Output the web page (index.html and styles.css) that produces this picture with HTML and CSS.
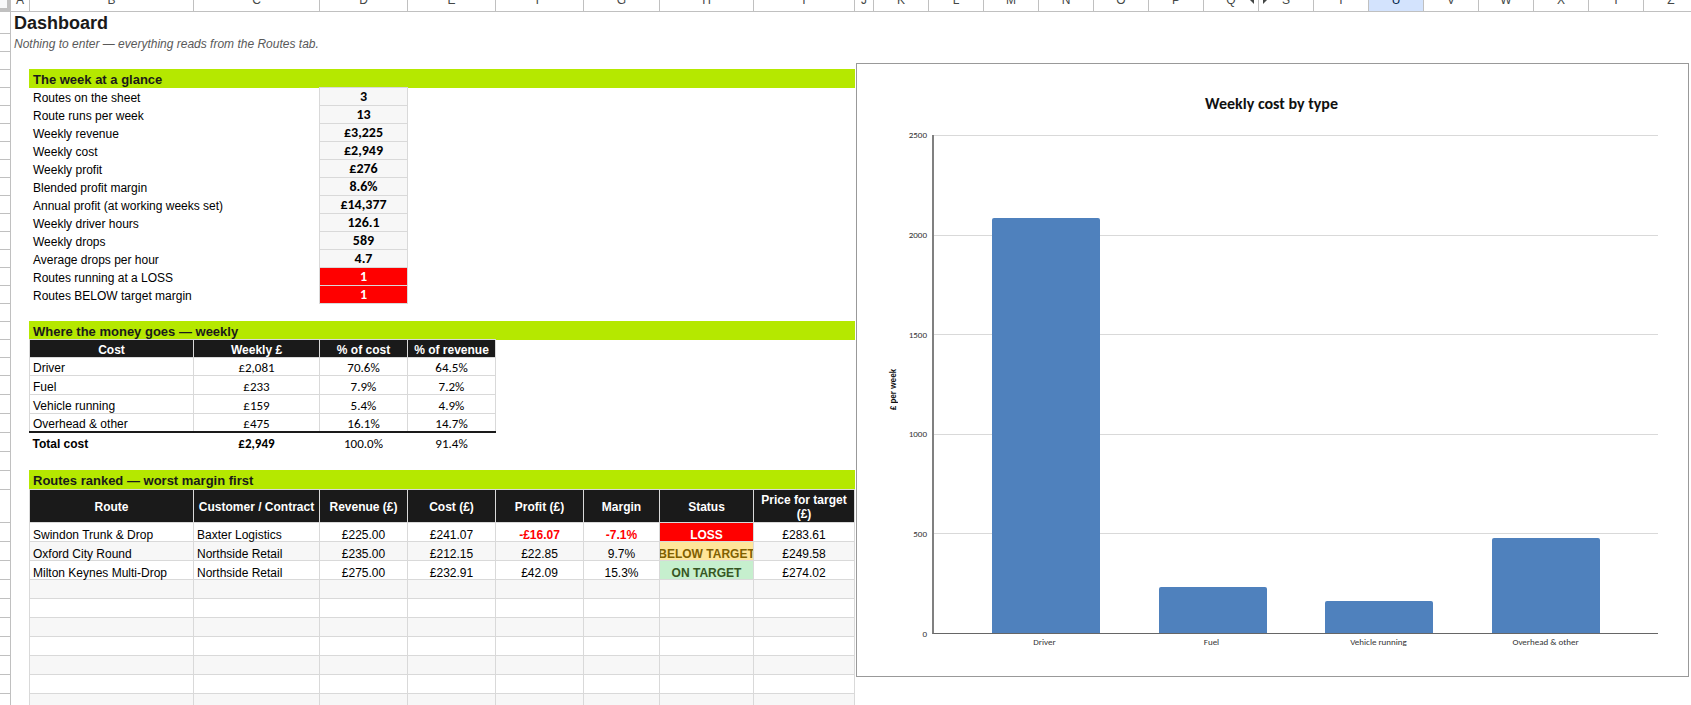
FILE: index.html
```
<!DOCTYPE html>
<html lang="en">
<head>
<meta charset="utf-8">
<title>Dashboard</title>
<link rel="stylesheet" href="styles.css">
</head>
<body>
<div class="workbook">
  <div class="columns">
    <span class="corner"></span>
    <span class="col w-a">A</span><span class="col w-b">B</span><span class="col w-c">C</span><span class="col w-d">D</span><span class="col w-d">E</span><span class="col w-d">F</span><span class="col w-g">G</span><span class="col w-h">H</span><span class="col w-i">I</span><span class="col w-j">J</span><span class="col">K</span><span class="col">L</span><span class="col">M</span><span class="col">N</span><span class="col">O</span><span class="col">P</span><span class="col has-prev">Q<svg class="tri prev" viewBox="0 0 4 8"><path d="M4 0v8L0 4z"/></svg></span><span class="col has-next"><svg class="tri next" viewBox="0 0 4 8"><path d="M0 0v8l4-4z"/></svg>S</span><span class="col">T</span><span class="col selected">U</span><span class="col">V</span><span class="col">W</span><span class="col">X</span><span class="col">Y</span><span class="col">Z</span>
  </div>
  <div class="body">
    <div class="gutter">
      <i class="r22"></i><i></i><i></i><i></i><i></i><i></i><i></i><i></i><i></i><i></i><i></i><i></i><i></i><i></i><i></i><i></i><i></i><i></i><i></i><i></i>
      <i class="r19"></i><i class="r19"></i><i class="r19"></i><i class="r19"></i><i class="r19"></i><i class="r19"></i><i class="r33"></i>
      <i class="r19"></i><i class="r19"></i><i class="r19"></i><i class="r19"></i><i class="r19"></i><i class="r19"></i><i class="r19"></i><i class="r19"></i><i class="r19"></i><i class="r19"></i>
    </div>
    <main class="sheet">
      <div class="cells">
        <h1>Dashboard</h1>
        <p class="note">Nothing to enter — everything reads from the Routes tab.</p>

        <section class="glance">
          <h2>The week at a glance</h2>
          <table class="kpis">
            <tr><th scope="row">Routes on the sheet</th><td>3</td></tr>
            <tr><th scope="row">Route runs per week</th><td>13</td></tr>
            <tr><th scope="row">Weekly revenue</th><td>£3,225</td></tr>
            <tr><th scope="row">Weekly cost</th><td>£2,949</td></tr>
            <tr><th scope="row">Weekly profit</th><td>£276</td></tr>
            <tr><th scope="row">Blended profit margin</th><td>8.6%</td></tr>
            <tr><th scope="row">Annual profit (at working weeks set)</th><td>£14,377</td></tr>
            <tr><th scope="row">Weekly driver hours</th><td>126.1</td></tr>
            <tr><th scope="row">Weekly drops</th><td>589</td></tr>
            <tr><th scope="row">Average drops per hour</th><td>4.7</td></tr>
            <tr><th scope="row">Routes running at a LOSS</th><td class="alert">1</td></tr>
            <tr><th scope="row">Routes BELOW target margin</th><td class="alert">1</td></tr>
          </table>
        </section>

        <section class="money">
          <h2>Where the money goes — weekly</h2>
          <table class="grid costs">
            <colgroup><col class="w-b"><col class="w-c"><col class="w-d"><col class="w-d"></colgroup>
            <thead><tr><th>Cost</th><th>Weekly £</th><th>% of cost</th><th>% of revenue</th></tr></thead>
            <tbody>
              <tr class="short"><td>Driver</td><td>£2,081</td><td>70.6%</td><td>64.5%</td></tr>
              <tr><td>Fuel</td><td>£233</td><td>7.9%</td><td>7.2%</td></tr>
              <tr><td>Vehicle running</td><td>£159</td><td>5.4%</td><td>4.9%</td></tr>
              <tr class="short"><td>Overhead &amp; other</td><td>£475</td><td>16.1%</td><td>14.7%</td></tr>
            </tbody>
            <tfoot><tr><td>Total cost</td><td>£2,949</td><td>100.0%</td><td>91.4%</td></tr></tfoot>
          </table>
        </section>

        <section class="ranked">
          <h2>Routes ranked — worst margin first</h2>
          <table class="grid routes">
            <colgroup><col class="w-b"><col class="w-c"><col class="w-d"><col class="w-d"><col class="w-d"><col class="w-g"><col class="w-h"><col class="w-i"></colgroup>
            <thead><tr><th>Route</th><th>Customer / Contract</th><th>Revenue (£)</th><th>Cost (£)</th><th>Profit (£)</th><th>Margin</th><th>Status</th><th>Price for target (£)</th></tr></thead>
            <tbody>
              <tr><td>Swindon Trunk &amp; Drop</td><td>Baxter Logistics</td><td>£225.00</td><td>£241.07</td><td class="neg">-£16.07</td><td class="neg">-7.1%</td><td class="status loss">LOSS</td><td>£283.61</td></tr>
              <tr><td>Oxford City Round</td><td>Northside Retail</td><td>£235.00</td><td>£212.15</td><td>£22.85</td><td>9.7%</td><td class="status below"><span>BELOW TARGET</span></td><td>£249.58</td></tr>
              <tr><td>Milton Keynes Multi-Drop</td><td>Northside Retail</td><td>£275.00</td><td>£232.91</td><td>£42.09</td><td>15.3%</td><td class="status on">ON TARGET</td><td>£274.02</td></tr>
              <tr><td></td><td></td><td></td><td></td><td></td><td></td><td></td><td></td></tr>
              <tr><td></td><td></td><td></td><td></td><td></td><td></td><td></td><td></td></tr>
              <tr><td></td><td></td><td></td><td></td><td></td><td></td><td></td><td></td></tr>
              <tr><td></td><td></td><td></td><td></td><td></td><td></td><td></td><td></td></tr>
              <tr><td></td><td></td><td></td><td></td><td></td><td></td><td></td><td></td></tr>
              <tr><td></td><td></td><td></td><td></td><td></td><td></td><td></td><td></td></tr>
              <tr><td></td><td></td><td></td><td></td><td></td><td></td><td></td><td></td></tr>
            </tbody>
          </table>
        </section>
      </div>

      <figure class="chart">
        <figcaption>Weekly cost by type</figcaption>
        <div class="plot-row">
          <div class="axis-title"><span>£ per week</span></div>
          <div class="scale"><span>2500</span><span>2000</span><span>1500</span><span>1000</span><span>500</span><span>0</span></div>
          <div class="plot">
            <div class="slot"><div class="bar" style="height:83.24%"></div></div>
            <div class="slot"><div class="bar" style="height:9.32%"></div></div>
            <div class="slot"><div class="bar" style="height:6.36%"></div></div>
            <div class="slot"><div class="bar" style="height:19%"></div></div>
          </div>
        </div>
        <div class="labels"><span>Driver</span><span>Fuel</span><span>Vehicle running</span><span>Overhead &amp; other</span></div>
      </figure>
    </main>
  </div>
</div>
</body>
</html>
```
FILE: styles.css
```
* { box-sizing: border-box; }

html, body { height: 100%; }

body {
  margin: 0;
  overflow: hidden;
  background: #fff;
  color: #000;
  font: 12px/14px "Liberation Sans", Arial, sans-serif;
}

.workbook {
  height: 100%;
  display: flex;
  flex-direction: column;
  overflow: hidden;
}

/* Shared column widths */
.w-a { width: 19px; }
.w-b { width: 164px; }
.w-c { width: 126px; }
.w-d { width: 88px; }
.w-g { width: 76px; }
.w-h { width: 94px; }
.w-i { width: 101px; }
.w-j { width: 19px; }

/* Column letters, partly scrolled out at the top */
.columns {
  flex: none;
  display: flex;
  align-items: flex-end;
  height: 12px;
  overflow: hidden;
  border-bottom: 1px solid #c0c0c0;
  color: #444746;
}

.corner {
  flex: none;
  width: 11px;
  height: 24px;
  background: #f8f9fa;
  border-right: 4px solid #c0c0c0;
  border-bottom: 3px solid #c0c0c0;
}

.col {
  flex: none;
  display: flex;
  align-items: center;
  justify-content: center;
  height: 24px;
  padding-top: 2px;
  border-right: 1px solid #c0c0c0;
}

.col:not([class*="w-"]) { width: 55px; }
.col.selected { background: #d3e3fd; color: #041e49; }

.tri { width: 4px; height: 8px; fill: #444746; }
.has-prev, .has-next { position: relative; }
.prev { position: absolute; right: 4px; bottom: 7px; }
.next { position: absolute; left: 4px; bottom: 7px; }

.body { flex: 1; display: flex; min-height: 0; }

.gutter {
  flex: none;
  width: 11px;
  border-right: 1px solid #c0c0c0;
}

.gutter i { display: block; height: 18px; border-bottom: 1px solid #c0c0c0; }
.gutter .r19 { height: 19px; }
.gutter .r22 { height: 22px; }
.gutter .r33 { height: 33px; }

.sheet { flex: 1; display: flex; align-items: flex-start; min-width: 0; }
.cells { flex: none; width: 844px; }

h1 {
  margin: 0;
  padding-left: 3px;
  font-size: 18px;
  line-height: 22px;
  color: #1a1a1a;
}

.note {
  margin: 0;
  padding-left: 3px;
  line-height: 20px;
  font-style: italic;
  color: #595959;
}

section { padding-left: 18px; }
.glance { padding-top: 15px; }
.money { padding-top: 17px; }
.ranked { padding-top: 19px; }

h2 {
  margin: 0;
  padding: 1px 0 0 4px;
  height: 19px;
  font-size: 13px;
  line-height: 20px;
  background: #b5e800;
  color: #1a1a1a;
}

.ranked h2 { height: 20px; }

table { border-collapse: collapse; table-layout: fixed; margin-top: -1px; }
th, td { padding: 0; }

.kpis { width: 379px; }
.kpis tr { height: 18px; }
.kpis th { font-weight: normal; text-align: left; padding: 3px 0 0 4px; }

.kpis td {
  width: 88px;
  border: 1px solid #d9d9d9;
  background: #f7f7f7;
  text-align: center;
  font: bold 14px/16px Carlito, Lato, sans-serif;
}

.kpis .alert { background: #f00; color: #fff; }

.grid tr { height: 19px; }
.grid th, .grid td { border: 1px solid #d9d9d9; text-align: center; }
.grid thead tr, .grid .short { height: 18px; }
.grid th { background: #1a1a1a; color: #fff; padding-top: 2px; }
.grid td { vertical-align: bottom; }
.grid td:first-child { text-align: left; padding-left: 3px; }

.costs { width: 467px; }
.costs td + td { font-family: Carlito, Lato, sans-serif; font-size: 13px; }
.costs tfoot td { border: 0; border-top: 2px solid #1a1a1a; }
.costs tfoot td:nth-child(-n+2) { font-weight: bold; }

.routes { width: 826px; }
.routes thead tr { height: 33px; }
.routes td { line-height: 12px; }
.routes td:nth-child(2) { text-align: left; padding-left: 3px; }
.routes tbody tr:nth-child(even) { background: #f7f7f7; }
.routes .neg { color: #f00; font-weight: bold; }
.status { font-weight: bold; white-space: nowrap; }
.status span { display: flex; justify-content: center; overflow: hidden; }
.loss { background: #f00; color: #fff; }
.below { background: #ffe599; color: #7f6000; }
.on { background: #c6efce; color: #375623; }

/* Embedded chart */
.chart {
  flex: 1;
  min-width: 0;
  height: 614px;
  margin: 51px 2px 0 1px;
  padding: 30px 30px 0 28px;
  border: 1px solid #999;
  background: #fff;
  color: #333;
  font: 9px/10px Carlito, Lato, sans-serif;
}

figcaption {
  height: 41px;
  text-align: center;
  font-size: 16px;
  line-height: 20px;
  font-weight: bold;
  color: #111;
}

.plot-row { display: flex; height: 499px; }

.axis-title {
  width: 15px;
  display: flex;
  align-items: center;
  justify-content: center;
  padding-top: 10px;
  font-weight: bold;
  color: #111;
}

.axis-title span { writing-mode: vertical-rl; rotate: 180deg; }

.scale {
  width: 32px;
  padding-right: 5px;
  margin: -5px 0;
  display: flex;
  flex-direction: column;
  justify-content: space-between;
  text-align: right;
}

.plot {
  flex: 1;
  display: flex;
  padding: 0 29px;
  border-left: 2px solid #808080;
  border-bottom: 1px solid #666;
  background: repeating-linear-gradient(#d9d9d9 0 1px, transparent 1px 20%);
}

.slot { flex: 1; display: flex; align-items: flex-end; justify-content: center; }
.bar { width: 65%; background: #4f81bd; border-radius: 2px 2px 0 0; }

.labels { display: flex; margin-left: 47px; padding: 3px 29px 0; }
.labels span { flex: 1; text-align: center; }
```
